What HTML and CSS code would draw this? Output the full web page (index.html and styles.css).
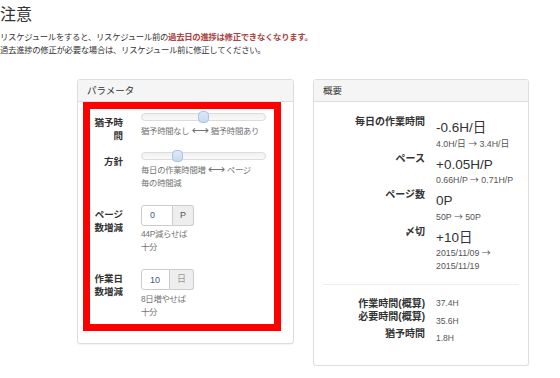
FILE: index.html
```html
<!DOCTYPE html>
<html lang="ja">
<head>
    <meta charset="UTF-8">
    <meta name="viewport" content="width=device-width, initial-scale=1.0">
    <title>リスケジュール</title>
    <link rel="stylesheet" href="styles.css">
</head>
<body>
    <h3 class="title">注意</h3>
    <p class="notice">リスケジュールをすると、リスケジュール前の<strong class="text-danger">過去日の進捗は修正できなくなります。</strong><br>過去進捗の修正が必要な場合は、リスケジュール前に修正してください。</p>

    <div class="columns">
        <div class="panel panel-params">
            <div class="panel-heading">パラメータ</div>
            <div class="panel-body">
                <form class="param-form">
                    <div class="form-group group-slider">
                        <label class="control-label">猶予時間</label>
                        <div class="control">
                            <div class="slider"><span class="slider-handle" style="left: 50%;"></span></div>
                            <p class="help">猶予時間なし <span class="arrow">⟷</span> 猶予時間あり</p>
                        </div>
                    </div>
                    <div class="form-group group-slider">
                        <label class="control-label">方針</label>
                        <div class="control">
                            <div class="slider"><span class="slider-handle" style="left: 29%;"></span></div>
                            <p class="help">毎日の作業時間増 <span class="arrow">⟷</span> ページ<br>毎の時間減</p>
                        </div>
                    </div>
                    <div class="form-group group-input">
                        <label class="control-label">ページ数増減</label>
                        <div class="control">
                            <div class="input-group">
                                <input type="text" class="form-control" value="0">
                                <span class="addon">P</span>
                            </div>
                            <p class="help">44P減らせば十分</p>
                        </div>
                    </div>
                    <div class="form-group group-input">
                        <label class="control-label">作業日数増減</label>
                        <div class="control">
                            <div class="input-group">
                                <input type="text" class="form-control" value="10">
                                <span class="addon addon-muted">日</span>
                            </div>
                            <p class="help">8日増やせば十分</p>
                        </div>
                    </div>
                </form>
            </div>
        </div>

        <div class="panel panel-summary">
            <div class="panel-heading">概要</div>
            <div class="panel-body">
                <dl class="summary">
                    <dt>毎日の作業時間</dt>
                    <dd><div class="big">-0.6H/日</div><div class="sub">4.0H/日 <span class="to">→</span> 3.4H/日</div></dd>
                    <dt>ペース</dt>
                    <dd><div class="big">+0.05H/P</div><div class="sub">0.66H/P <span class="to">→</span> 0.71H/P</div></dd>
                    <dt>ページ数</dt>
                    <dd><div class="big">0P</div><div class="sub">50P <span class="to">→</span> 50P</div></dd>
                    <dt>〆切</dt>
                    <dd><div class="big">+10日</div><div class="sub">2015/11/09 <span class="to">→</span><br>2015/11/19</div></dd>
                </dl>
                <hr>
                <div class="totals">
                    <div class="totals-labels">
                        <div>作業時間(概算)</div>
                        <div>必要時間(概算)</div>
                        <div>猶予時間</div>
                    </div>
                    <div class="totals-values">
                        <div>37.4H</div>
                        <div>35.6H</div>
                        <div>1.8H</div>
                    </div>
                </div>
            </div>
        </div>
    </div>
</body>
</html>
```

FILE: styles.css
```css
body {
    margin: 0;
    font-family: "Liberation Sans", "Noto Sans CJK JP", sans-serif;
    font-size: 8.4px;
    line-height: 13px;
    letter-spacing: -0.3px;
    color: #333;
    background: #fff;
}
.title {
    font-size: 16px;
    font-weight: normal;
    line-height: 17.6px;
    letter-spacing: 0;
    margin: 6px 0 7px;
}
.notice {
    margin: 0;
}
.text-danger {
    color: #a94442; /* bootstrap danger red */
}
.columns {
    display: flex;
    align-items: flex-start;
    gap: 19px;
    padding-left: 77px;
    margin-top: 22.4px;
}
.panel {
    box-sizing: border-box;
    border: 1px solid #ddd;
    border-radius: 3px;
    box-shadow: 0 1px 1px rgba(0, 0, 0, 0.05);
    background: #fff;
}
.panel-params {
    width: 217px;
}
.panel-summary {
    width: 216px;
}
.panel-heading {
    background: #f5f5f5;
    border-bottom: 1px solid #ddd;
    border-radius: 2px 2px 0 0;
    padding: 0 9px;
    font-size: 9.5px;
    line-height: 21px;
    letter-spacing: 0;
}

/* parameter form, boxed in red */
.panel-params .panel-body {
    padding: 0 12px 12px 5px;
}
.param-form {
    border: 7px solid #ff0000;
    padding: 2px 8px 5.5px 2px;
}
.form-group {
    display: flex;
    align-items: flex-start;
    gap: 18px;
    margin-bottom: 15px;
}
.form-group:first-child {
    margin-bottom: 7.5px;
}
.form-group:last-child {
    margin-bottom: 0;
}
.control-label {
    width: 31px;
    flex: none;
    text-align: right;
    font-weight: bold;
    font-size: 9.5px;
    line-height: 13px;
    letter-spacing: 0;
}
.group-slider .control-label {
    padding-top: 5.5px;
}
.group-input .control-label {
    padding-top: 3px;
}
.control {
    flex: 1;
}
.group-input .control {
    flex: none;
    width: 53px;
}
.group-input .help {
    width: 50px;
}
.slider {
    position: relative;
    height: 8px;
    margin: 2px 0 3px;
    box-sizing: border-box;
    border: 1px solid #dcdcdc;
    border-radius: 4px;
    background: linear-gradient(#f0f0f0, #f9f9f9);
}
.slider-handle {
    position: absolute;
    top: -3px;
    width: 11px;
    height: 12px;
    margin-left: -6px;
    box-sizing: border-box;
    border: 1px solid #a9c6e3;
    border-radius: 4px;
    background: linear-gradient(#dbe9f7, #c6dbf0);
}
.help {
    margin: 0;
    color: #737373;
}
.arrow {
    font-family: "DejaVu Sans", sans-serif;
    font-size: 12px;
    line-height: 1;
    letter-spacing: 0;
}
.input-group {
    display: flex;
    width: 53px;
    height: 21px;
    margin-bottom: 2.5px;
}
.form-control {
    flex: 1;
    min-width: 0;
    box-sizing: border-box;
    height: 21px;
    margin: 0;
    padding: 0 0 0 8px;
    border: 1px solid #ccc;
    border-radius: 3px 0 0 3px;
    font-family: "Liberation Sans", sans-serif;
    font-size: 9px;
    color: #3f5a7a;
}
.addon {
    box-sizing: border-box;
    height: 21px;
    padding: 0 7px;
    border: 1px solid #ccc;
    border-left: none;
    border-radius: 0 3px 3px 0;
    background: #eee;
    color: #555;
    font-size: 9px;
    line-height: 19px;
    letter-spacing: 0;
}
.addon-muted {
    color: #999;
}

/* summary */
.panel-summary .panel-body {
    padding: 13.5px 9px 15px;
}
.summary {
    display: grid;
    grid-template-columns: 102px 1fr;
    column-gap: 11px;
    row-gap: 1px;
    margin: 0;
}
.summary dt,
.totals-labels div {
    font-weight: bold;
    font-size: 10px;
    line-height: 13px;
    letter-spacing: 0;
    text-align: right;
}
.summary dd {
    margin: 0;
    padding-top: 4px;
}
.big {
    font-size: 13.5px;
    line-height: 17.5px;
    letter-spacing: 0;
}
.sub {
    font-size: 8.8px;
    line-height: 13px;
    letter-spacing: 0;
    color: #555;
}
.sub .to {
    font-family: "Noto Sans CJK JP", sans-serif;
}
hr {
    border: none;
    border-top: 1px solid #eee;
    margin: 10.5px 0 12px;
}
.totals {
    display: grid;
    grid-template-columns: 102px 1fr;
    column-gap: 11px;
}
.totals-labels div:last-child {
    margin-top: 4px;
}
.totals-values div {
    font-size: 8.5px;
    line-height: 13px;
    letter-spacing: 0;
    margin-bottom: 4.75px;
    color: #555;
}
```
